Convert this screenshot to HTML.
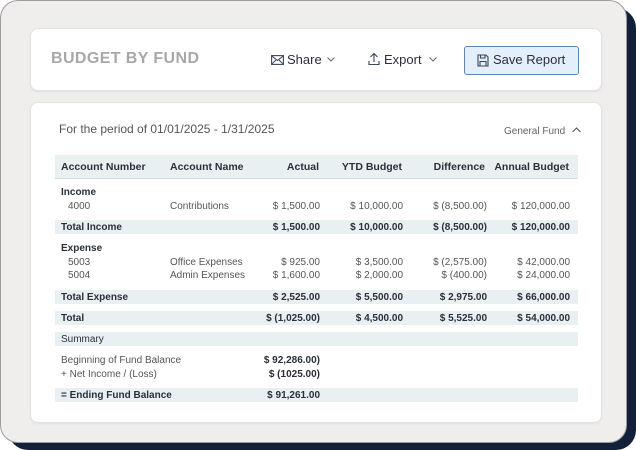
<!DOCTYPE html>
<html><head><style>
*{margin:0;padding:0;box-sizing:border-box}
body{width:636px;height:450px;background:#fff;font-family:"Liberation Sans",sans-serif;position:relative;overflow:hidden;color:#2b2f3a}
.shadow{position:absolute;left:8px;top:8px;width:628px;height:442px;background:#13203a;border-radius:20px}
.frame{position:absolute;left:0;top:0;width:627px;height:443px;background:#efeeec;border:1px solid #9a9ca0;border-radius:18px}
.card{position:absolute;background:#fff;border-radius:8px;border:1px solid #e2e2e6;box-shadow:0 1px 2px rgba(0,0,0,.06)}
.a{position:absolute;white-space:nowrap}
.band{position:absolute;left:55px;width:523px;background:#e9f0f2}
.r{text-align:right}
.t{font-size:10px;color:#555;margin-top:1px}
.b{font-size:10px;font-weight:bold;color:#2b2f3a;margin-top:1px}
.h{font-size:10.5px;font-weight:bold;color:#2b2f3a;margin-top:1px}
</style></head><body>
<div class="shadow"></div>
<div class="frame"></div>
<div class="card" style="left:30px;top:28px;width:572px;height:63px"></div>
<div class="card" style="left:30px;top:102px;width:572px;height:321px"></div>

<div class="a" style="left:51px;top:50px;font-size:16px;font-weight:bold;color:#a8a8a8;letter-spacing:0.4px">BUDGET BY FUND</div>
<svg class="a" style="left:271px;top:55px" width="13" height="10" viewBox="0 0 13 10"><rect x="0.6" y="0.6" width="11.8" height="8.8" fill="none" stroke="#3a4560" stroke-width="1.1"/><path d="M0.6 0.8L6.5 5.5L12.4 0.8M0.6 9.2L5 5M12.4 9.2L8 5" fill="none" stroke="#3a4560" stroke-width="1"/></svg>
<div class="a" style="left:287px;top:52px;font-size:13px;color:#2b2f3a">Share</div>
<svg class="a" style="left:327px;top:57px" width="8" height="5"><path d="M0.5 0.5L4 4L7.5 0.5" fill="none" stroke="#666" stroke-width="1"/></svg>
<svg class="a" style="left:368px;top:52px" width="12" height="14"><path d="M6 10V1.5M2.5 5L6 1.5L9.5 5M1 9V12.5H11V9" fill="none" stroke="#3a4560" stroke-width="1.1"/></svg>
<div class="a" style="left:384px;top:52px;font-size:13px;color:#2b2f3a">Export</div>
<svg class="a" style="left:429px;top:57px" width="8" height="5"><path d="M0.5 0.5L4 4L7.5 0.5" fill="none" stroke="#666" stroke-width="1"/></svg>
<div class="a" style="left:464px;top:46px;width:115px;height:29px;background:#e3effb;border:1px solid #5d86b3;border-radius:3px"></div>
<svg class="a" style="left:477px;top:54px" width="12" height="13"><path d="M1 1H9L11 3V12H1Z M3.5 1V4H8V1 M3 12V7.5H9V12" fill="none" stroke="#3a4560" stroke-width="1.1"/></svg>
<div class="a" style="left:493px;top:52px;font-size:13px;color:#2b2f3a">Save Report</div>

<div class="a" style="left:59px;top:122px;font-size:12px;color:#555">For the period of 01/01/2025 - 1/31/2025</div>
<div class="a" style="left:504px;top:126px;font-size:10px;color:#666">General Fund</div>
<svg class="a" style="left:572px;top:127px" width="9" height="6"><path d="M0.5 5L4.5 1L8.5 5" fill="none" stroke="#555" stroke-width="1.1"/></svg>

<div class="band" style="top:155px;height:24px;border-bottom:1px solid #d3dde2"></div>
<div class="a h" style="left:61px;top:160px">Account Number</div>
<div class="a h" style="left:170px;top:160px">Account Name</div>
<div class="a h r" style="right:317px;top:160px">Actual</div>
<div class="a h r" style="right:234px;top:160px">YTD Budget</div>
<div class="a h r" style="right:151px;top:160px">Difference</div>
<div class="a h r" style="right:67px;top:160px">Annual Budget</div>

<div class="a b" style="left:61px;top:186px">Income</div>
<div class="a t" style="left:68px;top:200px">4000</div><div class="a t" style="left:170px;top:200px">Contributions</div>
<div class="a t" style="right:316px;top:200px">$ 1,500.00</div><div class="a t" style="right:233px;top:200px">$ 10,000.00</div><div class="a t" style="right:149px;top:200px">$ (8,500.00)</div><div class="a t" style="right:66px;top:200px">$ 120,000.00</div>

<div class="band" style="top:220px;height:14px"></div>
<div class="a b" style="left:61px;top:221px">Total Income</div>
<div class="a b" style="right:316px;top:221px">$ 1,500.00</div><div class="a b" style="right:233px;top:221px">$ 10,000.00</div><div class="a b" style="right:149px;top:221px">$ (8,500.00)</div><div class="a b" style="right:66px;top:221px">$ 120,000.00</div>

<div class="a b" style="left:61px;top:242px">Expense</div>
<div class="a t" style="left:68px;top:256px">5003</div><div class="a t" style="left:170px;top:256px">Office Expenses</div>
<div class="a t" style="right:316px;top:256px">$ 925.00</div><div class="a t" style="right:233px;top:256px">$ 3,500.00</div><div class="a t" style="right:149px;top:256px">$ (2,575.00)</div><div class="a t" style="right:66px;top:256px">$ 42,000.00</div>
<div class="a t" style="left:68px;top:269px">5004</div><div class="a t" style="left:170px;top:269px">Admin Expenses</div>
<div class="a t" style="right:316px;top:269px">$ 1,600.00</div><div class="a t" style="right:233px;top:269px">$ 2,000.00</div><div class="a t" style="right:149px;top:269px">$ (400.00)</div><div class="a t" style="right:66px;top:269px">$ 24,000.00</div>

<div class="band" style="top:290px;height:14px"></div>
<div class="a b" style="left:61px;top:291px">Total Expense</div>
<div class="a b" style="right:316px;top:291px">$ 2,525.00</div><div class="a b" style="right:233px;top:291px">$ 5,500.00</div><div class="a b" style="right:149px;top:291px">$ 2,975.00</div><div class="a b" style="right:66px;top:291px">$ 66,000.00</div>

<div class="band" style="top:311px;height:14px"></div>
<div class="a b" style="left:61px;top:312px">Total</div>
<div class="a b" style="right:316px;top:312px">$ (1,025.00)</div><div class="a b" style="right:233px;top:312px">$ 4,500.00</div><div class="a b" style="right:149px;top:312px">$ 5,525.00</div><div class="a b" style="right:66px;top:312px">$ 54,000.00</div>

<div class="band" style="top:332px;height:14px"></div>
<div class="a b" style="left:61px;top:333px;font-weight:normal;color:#2b2f3a">Summary</div>
<div class="a t" style="left:61px;top:354px">Beginning of Fund Balance</div>
<div class="a b" style="right:316px;top:354px">$ 92,286.00)</div>
<div class="a t" style="left:61px;top:368px">+ Net Income / (Loss)</div>
<div class="a b" style="right:316px;top:368px">$ (1025.00)</div>
<div class="band" style="top:388px;height:14px"></div>
<div class="a b" style="left:61px;top:389px">= Ending Fund Balance</div>
<div class="a b" style="right:316px;top:389px">$ 91,261.00</div>
</body></html>
